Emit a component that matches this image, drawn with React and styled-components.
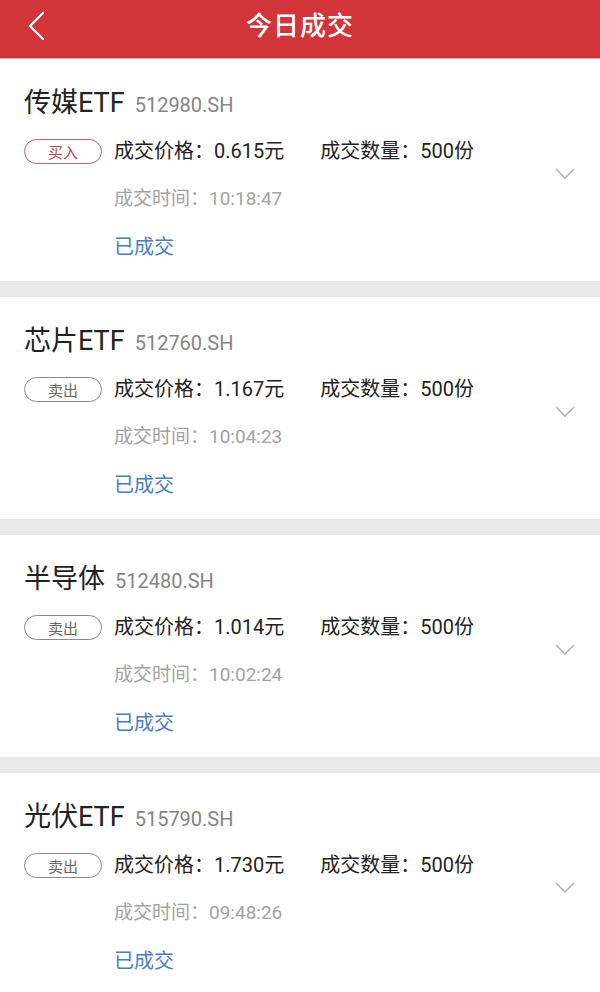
import React from "react";
import styled, { createGlobalStyle } from "styled-components";

const Global = createGlobalStyle`
  html, body { margin: 0; padding: 0; background: #e8e8e8; }
  body { font-family: Roboto, "Noto Sans CJK SC", "Noto Sans", sans-serif; }
`;

const Page = styled.div`
  width: 600px;
  min-height: 992px;
  background: #e8e8e8;
  display: flex;
  flex-direction: column;
`;

const Header = styled.header`
  height: 58px;
  background: #d13539;
  border-bottom: 1px solid #e4a0a2;
  display: flex;
  align-items: center;
  justify-content: center;
  position: relative;
  color: #fff;
`;

const BackBtn = styled.button`
  position: absolute;
  left: 22px;
  top: 8px;
  width: 30px;
  height: 36px;
  border: 0;
  padding: 0;
  background: transparent;
  display: flex;
  align-items: center;
  justify-content: center;
`;

const HeaderTitle = styled.h1`
  margin: 0;
  font-size: 26px;
  font-weight: 500;
  letter-spacing: 1px;
  line-height: 1;
  margin-top: -6px;
`;

const List = styled.div`
  display: flex;
  flex-direction: column;
  gap: 16px;
`;

const Card = styled.div`
  background: #fff;
  display: flex;
  align-items: center;
  padding: 27px 24px 21px 24px;
`;

const Main = styled.div`
  flex: 1;
  display: flex;
  flex-direction: column;
`;

const TitleRow = styled.div`
  display: flex;
  align-items: baseline;
  height: 34px;
  line-height: 34px;
`;

const Name = styled.span`
  font-size: 27px;
  color: #222;
`;

const Code = styled.span`
  font-size: 20px;
  color: #858585;
  margin-left: 10px;
`;

const Body = styled.div`
  display: grid;
  grid-template-columns: 78px 1fr;
  column-gap: 12px;
  row-gap: 22px;
  margin-top: 18px;
`;

const Tag = styled.div`
  height: 25px;
  box-sizing: border-box;
  border-radius: 13px;
  border: 1px solid ${(p) => (p.$buy ? "#c2636a" : "#8a8a8a")};
  color: ${(p) => (p.$buy ? "#c0444b" : "#666")};
  font-size: 15px;
  display: flex;
  align-items: center;
  justify-content: center;
  align-self: center;
`;

const Line = styled.div`
  grid-column: 2;
  display: flex;
  gap: 36px;
  height: 26px;
  line-height: 26px;
  font-size: ${(p) => p.$size || 20}px;
  color: ${(p) => p.$color || "#222"};
  white-space: nowrap;
`;

const Chevron = styled.div`
  width: 22px;
  display: flex;
  justify-content: center;
  margin-top: 2px;
`;

const trades = [
  { name: "传媒ETF", code: "512980.SH", side: "买入", buy: true, price: "0.615", qty: "500", time: "10:18:47" },
  { name: "芯片ETF", code: "512760.SH", side: "卖出", buy: false, price: "1.167", qty: "500", time: "10:04:23" },
  { name: "半导体", code: "512480.SH", side: "卖出", buy: false, price: "1.014", qty: "500", time: "10:02:24" },
  { name: "光伏ETF", code: "515790.SH", side: "卖出", buy: false, price: "1.730", qty: "500", time: "09:48:26" },
];

export default function App() {
  return (
    <Page>
      <Global />
      <Header>
        <BackBtn aria-label="返回">
          <svg width="20" height="30" viewBox="0 0 20 30">
            <polyline points="16,2 3,15 16,28" fill="none" stroke="#fff" strokeWidth="2.4" strokeLinecap="round" strokeLinejoin="round" />
          </svg>
        </BackBtn>
        <HeaderTitle>今日成交</HeaderTitle>
      </Header>
      <List>
        {trades.map((t) => (
          <Card key={t.code}>
            <Main>
              <TitleRow>
                <Name>{t.name}</Name>
                <Code>{t.code}</Code>
              </TitleRow>
              <Body>
                <Tag $buy={t.buy}>{t.side}</Tag>
                <Line>
                  <span>成交价格：{t.price}元</span>
                  <span>成交数量：{t.qty}份</span>
                </Line>
                <Line $size={19} $color="#a3a3a3">成交时间：{t.time}</Line>
                <Line $color="#4a7dc0">已成交</Line>
              </Body>
            </Main>
            <Chevron>
              <svg width="20" height="12" viewBox="0 0 20 12">
                <polyline points="1,1 10,10 19,1" fill="none" stroke="#b5b5b5" strokeWidth="1.6" />
              </svg>
            </Chevron>
          </Card>
        ))}
      </List>
    </Page>
  );
}
